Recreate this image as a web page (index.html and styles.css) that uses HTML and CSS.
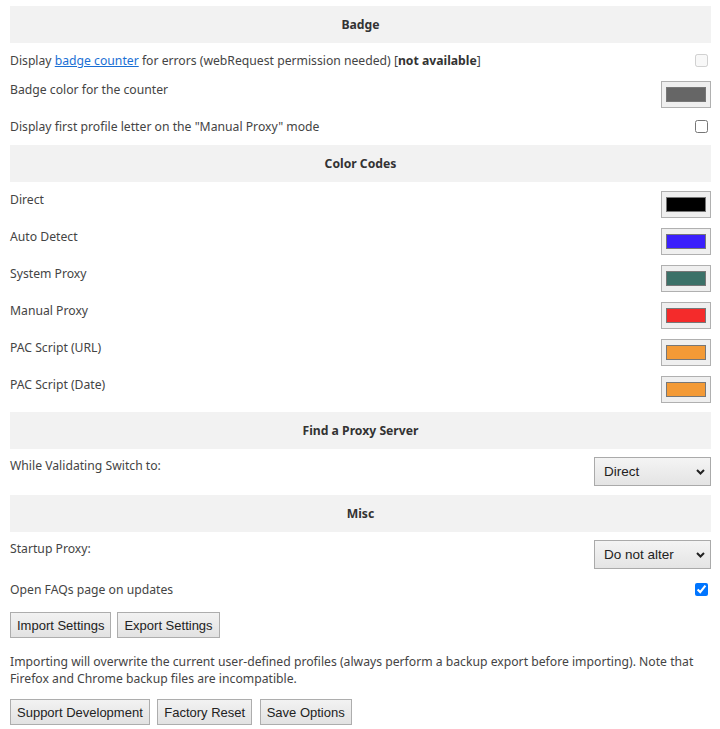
FILE: index.html
```html
<!DOCTYPE html>
<html>
<head>
<meta charset="utf-8">
<link rel="stylesheet" href="styles.css">
</head>
<body>
<div class="page">
  <section class="sec">
    <h2 class="head">Badge</h2>
    <div class="body">
      <div class="row chk-row first-row">
        <span class="label">Display <a href="#" class="link">badge counter</a> for errors (webRequest permission needed) [<b>not available</b>]</span>
        <input type="checkbox" disabled class="chk">
      </div>
      <div class="row">
        <span class="label">Badge color for the counter</span>
        <input type="color" class="clr" value="#666666">
      </div>
      <div class="row chk-row">
        <span class="label">Display first profile letter on the "Manual Proxy" mode</span>
        <input type="checkbox" class="chk">
      </div>
    </div>
  </section>

  <section class="sec">
    <h2 class="head">Color Codes</h2>
    <div class="body">
      <div class="row"><span class="label">Direct</span><input type="color" class="clr" value="#000000"></div>
      <div class="row"><span class="label">Auto Detect</span><input type="color" class="clr" value="#3a1ffc"></div>
      <div class="row"><span class="label">System Proxy</span><input type="color" class="clr" value="#3b7168"></div>
      <div class="row"><span class="label">Manual Proxy</span><input type="color" class="clr" value="#f42b2b"></div>
      <div class="row"><span class="label">PAC Script (URL)</span><input type="color" class="clr" value="#f39a36"></div>
      <div class="row"><span class="label">PAC Script (Date)</span><input type="color" class="clr" value="#f39a36"></div>
    </div>
  </section>

  <section class="sec">
    <h2 class="head">Find a Proxy Server</h2>
    <div class="body">
      <div class="row sel-row">
        <span class="label">While Validating Switch to:</span>
        <span class="sel-wrap">
          <select class="sel"><option>Direct</option></select>
          <svg class="chev" width="9" height="6" viewBox="0 0 9 6"><path d="M1 1 L4.5 4.5 L8 1" fill="none" stroke="#222" stroke-width="2"/></svg>
        </span>
      </div>
    </div>
  </section>

  <section class="sec">
    <h2 class="head">Misc</h2>
    <div class="body misc">
      <div class="row sel-row">
        <span class="label">Startup Proxy:</span>
        <span class="sel-wrap">
          <select class="sel"><option>Do not alter</option></select>
          <svg class="chev" width="9" height="6" viewBox="0 0 9 6"><path d="M1 1 L4.5 4.5 L8 1" fill="none" stroke="#222" stroke-width="2"/></svg>
        </span>
      </div>
      <div class="row chk-row faq">
        <span class="label">Open FAQs page on updates</span>
        <input type="checkbox" class="chk" checked>
      </div>
    </div>
  </section>

  <div class="btns top-btns">
    <button class="btn">Import Settings</button>
    <button class="btn">Export Settings</button>
  </div>
  <p class="note">Importing will overwrite the current user-defined profiles (always perform a backup export before importing). Note that Firefox and Chrome backup files are incompatible.</p>
  <div class="btns bottom-btns">
    <button class="btn">Support Development</button>
    <button class="btn">Factory Reset</button>
    <button class="btn">Save Options</button>
  </div>
</div>
</body>
</html>
```

FILE: styles.css
```css
html, body {
  margin: 0;
  padding: 0;
  background: #ffffff;
}
body {
  font-family: "Noto Sans", "Open Sans", sans-serif;
  font-size: 12.2px;
  color: #444;
}
.page {
  width: 701px;
  padding: 6px 0 0 10px;
}
.sec {
  margin: 0;
}
.head {
  margin: 0;
  height: 37px;
  line-height: 37px;
  background: #f2f2f2;
  text-align: center;
  font-size: 12.2px;
  font-weight: bold;
  color: #333;
}
.body {
  padding: 4px 0;
}
.row {
  display: flex;
  justify-content: space-between;
  align-items: flex-start;
  padding: 5px 0;
}
.label {
  line-height: 17px;
}
.chk-row {
  padding: 5px 0 6px;
  align-items: center;
}
.first-row {
  padding-bottom: 7px;
}
.link {
  color: #1a6fd4;
  text-decoration: underline;
}
.label b {
  color: #333;
}
.chk {
  width: 13px;
  height: 13px;
  margin: 0 3px 0 0;
}
.clr {
  width: 50px;
  height: 27px;
  margin: 0;
  padding: 1px 2px;
  border: 1px solid #b0b0b0;
  background: #efefef;
  box-sizing: border-box;
}
.clr::-webkit-color-swatch-wrapper {
  padding: 4px 2px;
}
.clr::-webkit-color-swatch {
  border: 1px solid #777;
}
.sel-row {
  padding: 4px 0 5px;
}
.sel-wrap {
  position: relative;
  display: inline-block;
  height: 29px;
}
.sel {
  -webkit-appearance: none;
  appearance: none;
  width: 117px;
  height: 29px;
  margin: 0;
  padding: 0 0 0 9px;
  border: 1px solid #aaa;
  border-radius: 0;
  background: linear-gradient(#f4f4f4, #e4e4e4);
  font-family: "Liberation Sans", Arial, sans-serif;
  font-size: 13.5px;
  color: #222;
}
.chev {
  position: absolute;
  right: 6px;
  top: 12px;
  pointer-events: none;
}
.misc {
  padding-bottom: 4px;
}
.faq {
  padding: 7px 0 5px;
}
.btns {
  display: flex;
  gap: 6px;
}
.top-btns {
  margin-top: 5px;
}
.bottom-btns {
  gap: 7.5px;
}
.btn {
  height: 26px;
  margin: 0;
  padding: 1px 6px;
  border: 1px solid #adadad;
  border-radius: 0;
  background: linear-gradient(#f2f2f2, #e2e2e2);
  font-family: "Liberation Sans", Arial, sans-serif;
  font-size: 13px;
  color: #222;
}
.note {
  margin: 15px 0 12px;
  line-height: 17px;
}
```
